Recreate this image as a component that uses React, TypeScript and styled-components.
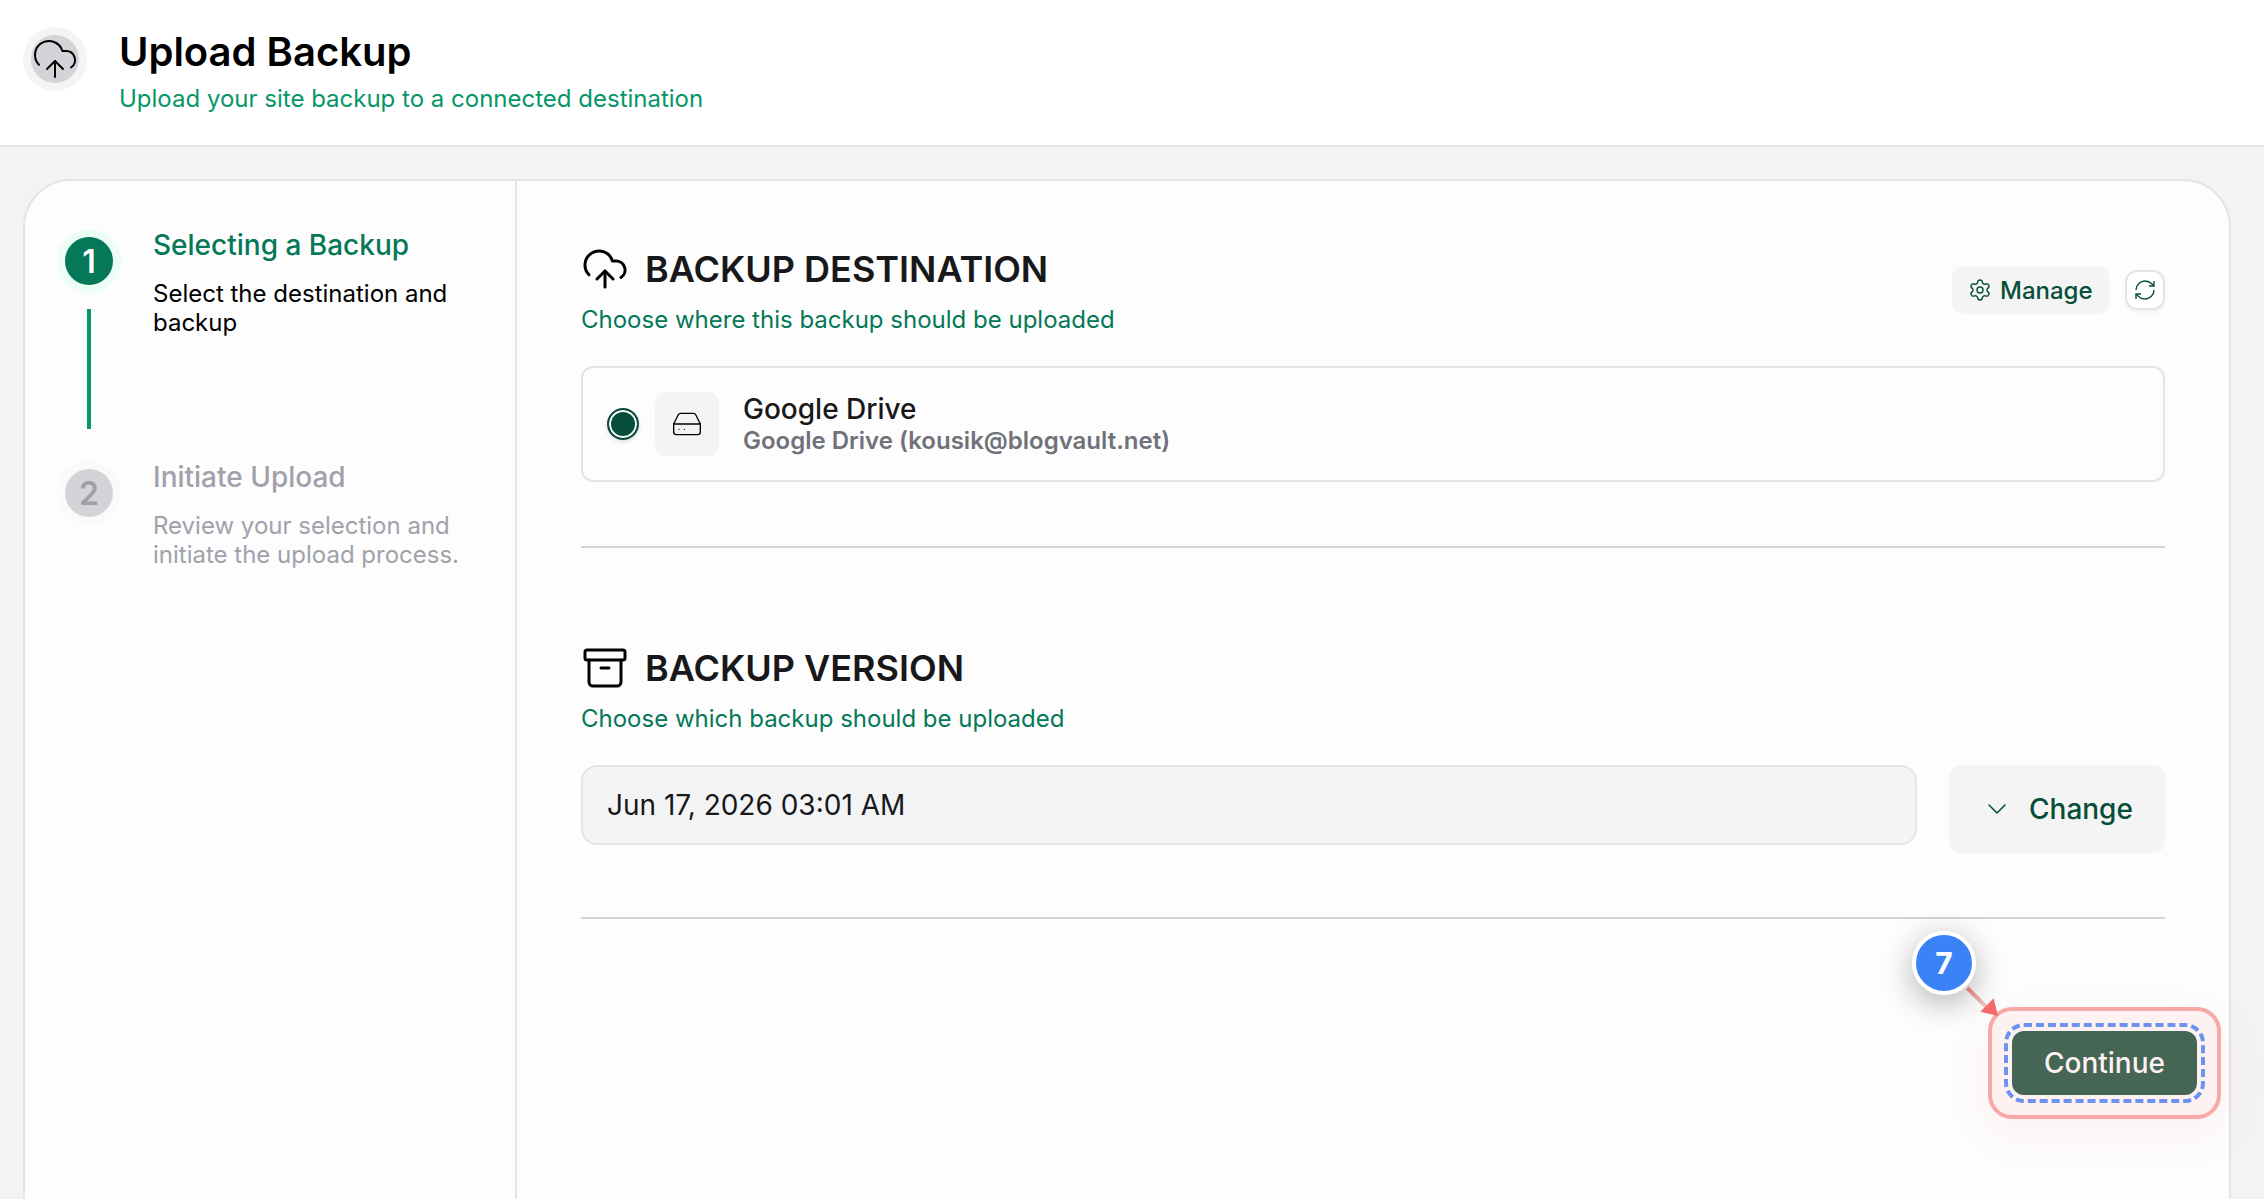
import React from 'react';
import styled, { createGlobalStyle } from 'styled-components';
import { CloudUpload, Archive, HardDrive, Settings, RefreshCw, ChevronDown } from 'lucide-react';

const GlobalStyle = createGlobalStyle`
  * { box-sizing: border-box; }
  html, body, #root { height: 100%; }
  body {
    margin: 0;
    background: #f3f3f3;
    color: #18181b;
    font-family: Inter, "Liberation Sans", sans-serif;
    overflow: hidden;
  }
  h1, h2, h3, p { margin: 0; }
  button { font-family: inherit; border: 0; cursor: pointer; }
  svg { flex: none; }
`;

const Page = styled.div`
  display: flex;
  flex-direction: column;
  height: 1199px;
  overflow: hidden;
`;

const Header = styled.header`
  display: flex;
  gap: 40px;
  height: 147px;
  flex: none;
  padding: 28px 24px 0 31px;
  background: #fff;
  border-bottom: 2px solid #e4e4e4;
`;

const HeaderBadge = styled.span`
  display: flex;
  align-items: center;
  justify-content: center;
  width: 48px;
  height: 48px;
  margin-top: 7px;
  border-radius: 50%;
  background: #d4d4d8;
  box-shadow: 0 0 0 8px #f4f4f4;
  color: #000;
`;

const PageTitle = styled.h1`
  font-size: 40px;
  line-height: 48px;
  font-weight: 600;
  color: #000;
`;

const PageHint = styled.p`
  margin-top: 7px;
  font-size: 24px;
  line-height: 32px;
  color: #059669;
`;

const Card = styled.main`
  display: flex;
  flex: none;
  width: 2208px;
  height: 1200px;
  margin: 32px 0 0 23px;
  background: #fdfdfd;
  border: 2px solid #e4e4e4;
  border-radius: 48px;
`;

const Steps = styled.aside`
  display: flex;
  flex-direction: column;
  flex: none;
  width: 492px;
  padding: 48px 40px 0;
  border-right: 2px solid #e4e4e4;
`;

const Step = styled.section`
  display: flex;
  gap: 40px;
  height: 232px;
`;

const StepRail = styled.div`
  display: flex;
  flex-direction: column;
  align-items: center;
  gap: 24px;
  padding-top: 8px;
`;

const StepNumber = styled.span<{ $active?: boolean }>`
  display: flex;
  align-items: center;
  justify-content: center;
  width: 48px;
  height: 48px;
  border-radius: 50%;
  font-size: 32px;
  font-weight: 600;
  color: ${p => (p.$active ? '#fff' : '#9f9fa9')};
  background: ${p => (p.$active ? '#047857' : '#d4d4d8')};
  box-shadow: 0 0 0 8px ${p => (p.$active ? '#ecfdf5' : '#fafafa')};
`;

const StepLine = styled.span`
  width: 4px;
  height: 120px;
  background: #059669;
`;

const StepText = styled.div`
  width: 320px;
`;

const StepTitle = styled.h3<{ $active?: boolean }>`
  font-size: 28px;
  line-height: 32px;
  font-weight: 500;
  color: ${p => (p.$active ? '#047857' : '#a1a1aa')};
`;

const StepHint = styled.p<{ $active?: boolean }>`
  margin-top: 18px;
  font-size: 24px;
  line-height: 29px;
  color: ${p => (p.$active ? '#000' : '#a1a1aa')};
`;

const Content = styled.div`
  flex: 1;
  padding: 64px 64px 0;
`;

const SectionHead = styled.div`
  display: flex;
  justify-content: space-between;
  height: 91px;
`;

const SectionTitle = styled.h2`
  display: flex;
  align-items: center;
  gap: 16px;
  height: 48px;
  font-size: 36px;
  font-weight: 600;
  color: #18181b;
  svg { color: #000; }
`;

const SectionHint = styled.p`
  margin-top: 11px;
  font-size: 24px;
  line-height: 32px;
  color: #047857;
`;

const Actions = styled.div`
  display: flex;
  align-items: center;
  gap: 16px;
  height: 48px;
  margin-top: 21px;
`;

const ManageButton = styled.button`
  display: flex;
  align-items: center;
  gap: 8px;
  width: 157px;
  height: 48px;
  padding: 0 0 0 16px;
  border-radius: 12px;
  background: #f4f4f4;
  color: #064e3b;
  font-size: 24px;
  font-weight: 500;
`;

const RefreshButton = styled.button`
  display: flex;
  align-items: center;
  justify-content: center;
  width: 40px;
  height: 40px;
  padding: 0;
  border: 2px solid #e4e4e4;
  border-radius: 12px;
  background: #fff;
  color: #064e3b;
  box-shadow: 0 2px 4px rgba(0, 0, 0, 0.05);
`;

const Destination = styled.label`
  display: flex;
  align-items: center;
  height: 116px;
  margin-top: 30px;
  padding-left: 24px;
  border: 2px solid #e4e4e4;
  border-radius: 12px;
`;

const Radio = styled.span`
  width: 32px;
  height: 32px;
  border: 2px solid #064e3b;
  border-radius: 50%;
  background: #064e3b;
  box-shadow: inset 0 0 0 2px #fff, 0 2px 4px rgba(0, 0, 0, 0.12);
`;

const DriveTile = styled.span`
  display: flex;
  align-items: center;
  justify-content: center;
  width: 64px;
  height: 64px;
  margin: 0 24px 0 16px;
  border-radius: 12px;
  background: #f4f4f4;
  color: #000;
`;

const DestinationText = styled.div`
  padding-top: 2px;
`;

const DestinationName = styled.p`
  font-size: 28px;
  line-height: 32px;
  font-weight: 500;
`;

const DestinationAccount = styled.p`
  font-size: 24px;
  line-height: 32px;
  font-weight: 600;
  color: #71717a;
`;

const Divider = styled.hr<{ $after: number }>`
  height: 2px;
  margin: 64px 0 ${p => p.$after}px;
  border: 0;
  background: #d4d4d8;
`;

const VersionRow = styled.div`
  display: flex;
  align-items: flex-start;
  gap: 32px;
  margin-top: 30px;
`;

const VersionField = styled.div`
  display: flex;
  align-items: center;
  flex: 1;
  height: 80px;
  padding-left: 24px;
  border: 2px solid #e4e4e7;
  border-radius: 16px;
  background: #f3f4f6;
  font-size: 28px;
  color: #18181b;
`;

const ChangeButton = styled.button`
  display: flex;
  align-items: center;
  gap: 16px;
  width: 216px;
  height: 88px;
  padding: 0 0 0 32px;
  border-radius: 12px;
  background: #f4f4f4;
  color: #064e3b;
  font-size: 28px;
  font-weight: 500;
`;

const Footer = styled.footer`
  display: flex;
  justify-content: flex-end;
  margin-right: -56px;
`;

const Highlight = styled.div`
  position: relative;
  padding: 12px;
  border: 4px solid #faa7a7;
  border-radius: 24px;
  background: #fef1f1;
  box-shadow: 0 16px 48px rgba(239, 68, 68, 0.07);
`;

const FocusFrame = styled.div`
  padding: 4px;
  border: 4px dashed #6b93ef;
  border-radius: 20px;
`;

const ContinueButton = styled.button`
  display: block;
  width: 185px;
  height: 64px;
  padding: 0;
  border-radius: 12px;
  background: #456655;
  color: #fef1f1;
  font-size: 28px;
  font-weight: 500;
`;

const Marker = styled.span`
  position: absolute;
  left: -80px;
  top: -80px;
  display: flex;
  align-items: center;
  justify-content: center;
  width: 64px;
  height: 64px;
  border: 4px solid #fff;
  border-radius: 50%;
  background: #3b82f6;
  color: #fff;
  font-size: 30px;
  font-weight: 700;
  box-shadow: 0 8px 32px rgba(0, 0, 0, 0.3);
`;

const Pointer = styled.svg`
  position: absolute;
  z-index: 1;
  left: -28px;
  top: -26px;
`;

export default function App() {
  return (
    <>
      <GlobalStyle />
      <Page>
        <Header>
          <HeaderBadge><CloudUpload size={48} strokeWidth={1} /></HeaderBadge>
          <div>
            <PageTitle>Upload Backup</PageTitle>
            <PageHint>Upload your site backup to a connected destination</PageHint>
          </div>
        </Header>
        <Card>
          <Steps>
            <Step>
              <StepRail>
                <StepNumber $active>1</StepNumber>
                <StepLine />
              </StepRail>
              <StepText>
                <StepTitle $active>Selecting a Backup</StepTitle>
                <StepHint $active>Select the destination and backup</StepHint>
              </StepText>
            </Step>
            <Step>
              <StepRail><StepNumber>2</StepNumber></StepRail>
              <StepText>
                <StepTitle>Initiate Upload</StepTitle>
                <StepHint>Review your selection and initiate the upload process.</StepHint>
              </StepText>
            </Step>
          </Steps>
          <Content>
            <SectionHead>
              <div>
                <SectionTitle><CloudUpload size={48} strokeWidth={1.5} />BACKUP DESTINATION</SectionTitle>
                <SectionHint>Choose where this backup should be uploaded</SectionHint>
              </div>
              <Actions>
                <ManageButton><Settings size={24} strokeWidth={1.4} />Manage</ManageButton>
                <RefreshButton><RefreshCw size={24} strokeWidth={1.4} strokeLinecap="butt" strokeLinejoin="miter" /></RefreshButton>
              </Actions>
            </SectionHead>
            <Destination>
              <Radio />
              <DriveTile><HardDrive size={32} strokeWidth={1} /></DriveTile>
              <DestinationText>
                <DestinationName>Google Drive</DestinationName>
                <DestinationAccount>Google Drive (kousik@blogvault.net)</DestinationAccount>
              </DestinationText>
            </Destination>
            <Divider $after={96} />
            <SectionHead>
              <div>
                <SectionTitle><Archive size={48} strokeWidth={1.5} />BACKUP VERSION</SectionTitle>
                <SectionHint>Choose which backup should be uploaded</SectionHint>
              </div>
            </SectionHead>
            <VersionRow>
              <VersionField>Jun 17, 2026 03:01 AM</VersionField>
              <ChangeButton><ChevronDown size={32} strokeWidth={1.2} />Change</ChangeButton>
            </VersionRow>
            <Divider $after={88} />
            <Footer>
              <Highlight>
                <FocusFrame>
                  <ContinueButton>Continue</ContinueButton>
                </FocusFrame>
                <Pointer width="40" height="40" viewBox="0 0 40 40">
                  <defs>
                    <linearGradient id="pointerFade" gradientUnits="userSpaceOnUse" x1="3" y1="3" x2="22" y2="22">
                      <stop offset="0" stopColor="#de7474" />
                      <stop offset="1" stopColor="#edc8c8" />
                    </linearGradient>
                  </defs>
                  <line x1="3.3" y1="3" x2="23" y2="22.7" stroke="url(#pointerFade)" strokeWidth="4" />
                  <path d="M34 31L16.3 26.7L29.7 13.3Z" fill="#f46a6a" />
                </Pointer>
                <Marker>7</Marker>
              </Highlight>
            </Footer>
          </Content>
        </Card>
      </Page>
    </>
  );
}
